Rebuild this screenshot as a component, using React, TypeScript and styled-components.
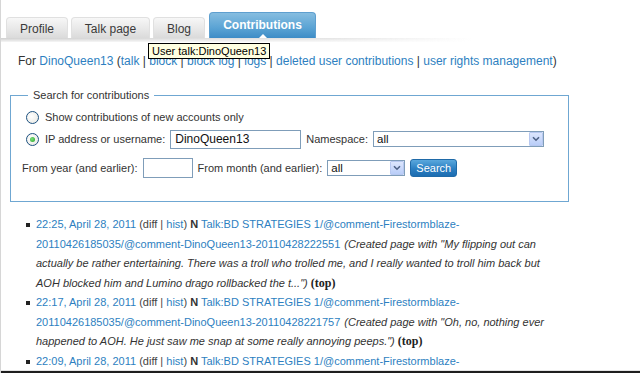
import React from "react";
import styled, { createGlobalStyle } from "styled-components";

const Global = createGlobalStyle`
  html, body { margin: 0; padding: 0; background: #fff; }
  body { font-family: "Liberation Sans", Arial, sans-serif; color: #333; }
`;

const Frame = styled.div`
  width: 640px;
  height: 373px;
  box-sizing: border-box;
  border-left: 1px solid #d6d6d6;
  display: flex;
  flex-direction: column;
  overflow: hidden;
  position: relative;
`;

const Content = styled.div`
  flex: 1;
  overflow: hidden;
  position: relative;
`;

const BottomBar = styled.div`
  height: 2px;
  background: #1e1e1e;
  border-top: 1px solid #e4e4e4;
  flex: none;
`;

const TabBar = styled.div`
  display: flex;
  align-items: flex-end;
  padding: 12px 0 0 5px;
  height: 26px;
`;

const Tab = styled.div<{ $w: number; $gap: number; $active?: boolean }>`
  width: ${(p) => p.$w}px;
  margin-right: ${(p) => p.$gap}px;
  height: ${(p) => (p.$active ? 26 : 21)}px;
  box-sizing: border-box;
  border-radius: 4px 4px 0 0;
  display: flex;
  justify-content: center;
  align-items: ${(p) => (p.$active ? "flex-start" : "center")};
  padding-top: ${(p) => (p.$active ? 5 : 1)}px;
  font-size: 12px;
  position: relative;
  font-weight: ${(p) => (p.$active ? "bold" : "normal")};
  color: ${(p) => (p.$active ? "#fff" : "#3a3a3a")};
  background: ${(p) =>
    p.$active
      ? "linear-gradient(#86bde0, #5aa3d4 60%, #3d8cc6)"
      : "linear-gradient(#f7f7f7, #e9e9e9 50%, #dadada)"};
  border: 1px solid ${(p) => (p.$active ? "#5e9fcf" : "#e0e0e0")};
  border-bottom: none;
`;

const TabNotch = styled.span`
  position: absolute;
  bottom: 0;
  left: 50%;
  margin-left: -4px;
  width: 0;
  height: 0;
  border-left: 4px solid transparent;
  border-right: 4px solid transparent;
  border-bottom: 4px solid #fff;
`;

const TabShadow = styled.div`
  height: 4px;
  width: 470px;
  background: linear-gradient(to right, #cfcfcf, #e3e3e3 70%, rgba(255, 255, 255, 0));
  mask-image: linear-gradient(#000, rgba(0, 0, 0, 0.2));
`;

const Tooltip = styled.div`
  position: absolute;
  left: 147px;
  top: 43px;
  background: #ffffe1;
  border: 1px solid #000;
  font-size: 11px;
  color: #000;
  padding: 1px 3px;
  line-height: 12px;
  z-index: 5;
`;

const Subtitle = styled.div`
  margin: 11px 0 0 17px;
  font-size: 12px;
  line-height: 16px;
  color: #333;
`;

const A = styled.span`
  color: #2d7fc1;
`;

const Fieldset = styled.fieldset`
  margin: 20px 0 0 9px;
  width: 559px;
  box-sizing: border-box;
  border: 1px solid #6fa7d2;
  padding: 4px 10px 21px 11px;
  font-family: "Liberation Sans", Tahoma, sans-serif;
  font-size: 11px;
  color: #333;
`;

const Legend = styled.legend`
  padding: 0 5px;
  margin-left: 6px;
  font-size: 11px;
  color: #333;
`;

const Row = styled.div<{ $indent?: number; $tall?: boolean }>`
  display: flex;
  align-items: center;
  gap: 5px;
  height: ${(p) => (p.$tall ? 24 : 20)}px;
  padding-left: ${(p) => p.$indent ?? 0}px;
  margin-top: ${(p) => (p.$tall ? 7 : 2)}px;
`;

const Radio = styled.span<{ $on?: boolean }>`
  width: 11px;
  height: 11px;
  border-radius: 50%;
  border: 1px solid #1c5180;
  background: radial-gradient(circle at 40% 40%, #fff, #e6e6e0);
  display: inline-flex;
  align-items: center;
  justify-content: center;
  flex: none;
  margin-right: 1px;
  &::after {
    content: "";
    display: ${(p) => (p.$on ? "block" : "none")};
    width: 5px;
    height: 5px;
    border-radius: 50%;
    background: radial-gradient(circle at 40% 40%, #7ee07e, #21a121);
  }
`;

const TextInput = styled.div<{ $w: number; $h: number }>`
  width: ${(p) => p.$w}px;
  height: ${(p) => p.$h}px;
  box-sizing: border-box;
  border: 1px solid #7f9db9;
  background: #fff;
  font-size: 12px;
  color: #111;
  padding: 0 4px;
  display: flex;
  align-items: center;
  flex: none;
`;

const Select = styled.div<{ $w: number }>`
  width: ${(p) => p.$w}px;
  height: 16px;
  box-sizing: border-box;
  border: 1px solid #7f9db9;
  background: #fff;
  display: flex;
  align-items: center;
  font-size: 11.5px;
  color: #111;
  flex: none;
`;

const SelectText = styled.span`
  flex: 1;
  padding-left: 3px;
`;

const SelectBtn = styled.span`
  width: 14px;
  height: 14px;
  box-sizing: border-box;
  border: 1px solid #b7c8f0;
  background: linear-gradient(#dce6fd, #b9cdf8);
  display: flex;
  align-items: center;
  justify-content: center;
  border-radius: 1px;
`;

const Button = styled.div`
  width: 47px;
  height: 18px;
  box-sizing: border-box;
  border: 1px solid #1f6aa8;
  border-radius: 3px;
  background: linear-gradient(#5aa8dd, #2b7fc2 55%, #1c6db1);
  color: #fff;
  font-size: 11px;
  display: flex;
  align-items: center;
  justify-content: center;
  flex: none;
`;

const List = styled.ul`
  margin: 13px 0 0 0;
  padding: 0 0 0 35px;
  width: 518px;
  list-style: none;
`;

const Item = styled.li`
  font-size: 11px;
  line-height: 19.5px;
  position: relative;
  &::before {
    content: "";
    position: absolute;
    left: -10px;
    top: 8px;
    width: 4px;
    height: 4px;
    background: #222;
  }
`;

const Gray = styled.span`
  color: #444;
`;

const Bold = styled.b`
  color: #333;
`;

const Comment = styled.i`
  font-size: 11px;
  line-height: 1;
  color: #333;
  margin-left: 4px;
`;

const Top = styled.b`
  font-family: "Liberation Serif", "Times New Roman", serif;
  font-size: 12px;
  line-height: 1;
  color: #222;
`;

const Arrow = () => (
  <svg width="8" height="6" viewBox="0 0 8 6">
    <path d="M1 1.2 L4 4.2 L7 1.2" fill="none" stroke="#4d6185" strokeWidth="1.6" />
  </svg>
);

type Entry = { time: string; page: string; comment: string };

const entries: Entry[] = [
  {
    time: "22:25, April 28, 2011",
    page: "Talk:BD STRATEGIES 1/@comment-Firestormblaze-20110426185035/@comment-DinoQueen13-20110428222551",
    comment:
      "(Created page with \"My flipping out can actually be rather entertaining. There was a troll who trolled me, and I really wanted to troll him back but AOH blocked him and Lumino drago rollbacked the t...\")",
  },
  {
    time: "22:17, April 28, 2011",
    page: "Talk:BD STRATEGIES 1/@comment-Firestormblaze-20110426185035/@comment-DinoQueen13-20110428221757",
    comment:
      "(Created page with \"Oh, no, nothing ever happened to AOH. He just saw me snap at some really annoying peeps.\")",
  },
  {
    time: "22:09, April 28, 2011",
    page: "Talk:BD STRATEGIES 1/@comment-Firestormblaze-20110426185035/@comment-DinoQueen13-20110428220913",
    comment: "(Created page with \"Yes.\")",
  },
];

export default function App() {
  return (
    <>
      <Global />
      <Frame>
        <Content>
          <TabBar>
            <Tab $w={62} $gap={3}>Profile</Tab>
            <Tab $w={79} $gap={3}>Talk page</Tab>
            <Tab $w={52} $gap={4}>Blog</Tab>
            <Tab $w={107} $gap={0} $active>
              Contributions
              <TabNotch />
            </Tab>
          </TabBar>
          <TabShadow />
          <Tooltip>User talk:DinoQueen13</Tooltip>
          <Subtitle>
            For <A>DinoQueen13</A> (<A>talk</A> | <A>block</A> | <A>block log</A> | <A>logs</A> |{" "}
            <A>deleted user contributions</A> | <A>user rights management</A>)
          </Subtitle>
          <Fieldset>
            <Legend>Search for contributions</Legend>
            <Row $indent={4}>
              <Radio />
              <span>Show contributions of new accounts only</span>
            </Row>
            <Row $indent={4}>
              <Radio $on />
              <span>IP address or username:</span>
              <TextInput $w={131} $h={19}>DinoQueen13</TextInput>
              <span>Namespace:</span>
              <Select $w={171}>
                <SelectText>all</SelectText>
                <SelectBtn>
                  <Arrow />
                </SelectBtn>
              </Select>
            </Row>
            <Row $tall>
              <span>From year (and earlier):</span>
              <TextInput $w={50} $h={20} />
              <span>From month (and earlier):</span>
              <Select $w={78}>
                <SelectText>all</SelectText>
                <SelectBtn>
                  <Arrow />
                </SelectBtn>
              </Select>
              <Button>Search</Button>
            </Row>
          </Fieldset>
          <List>
            {entries.map((e) => (
              <Item key={e.time}>
                <A>{e.time}</A> <Gray>(diff | <A>hist</A>)</Gray> <Bold>N</Bold> <A>{e.page}</A>
                <Comment>{e.comment}</Comment> <Top>(top)</Top>
              </Item>
            ))}
          </List>
        </Content>
        <BottomBar />
      </Frame>
    </>
  );
}
